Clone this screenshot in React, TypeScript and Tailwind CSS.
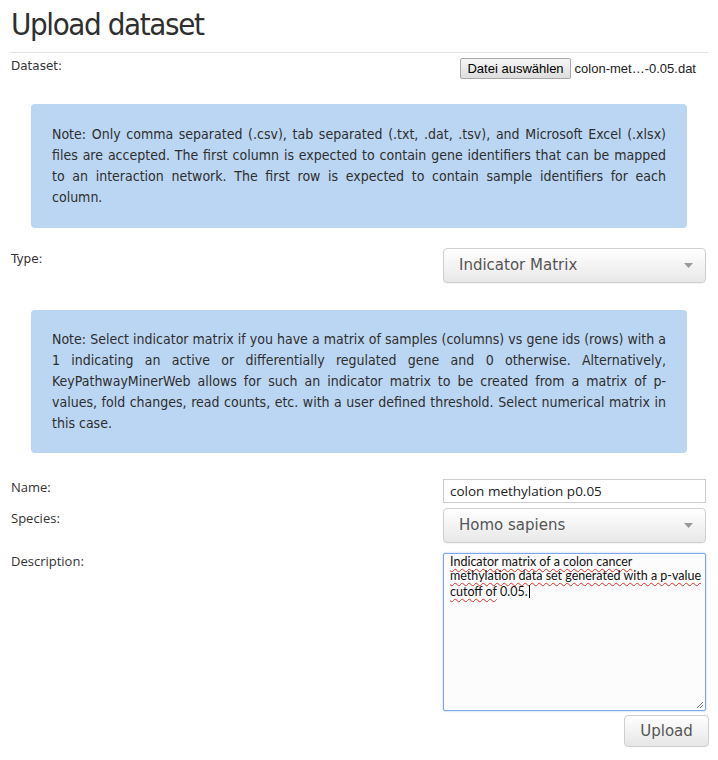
import React from "react";

const narrow = { fontFamily: '"Liberation Sans Narrow", "DejaVu Sans Condensed", "Liberation Sans", sans-serif' };

function Caret() {
  return (
    <svg width="9" height="5" viewBox="0 0 9 5" className="shrink-0">
      <path d="M0 0 H9 L4.5 5 Z" fill="#9a9a9a" />
    </svg>
  );
}

function FakeSelect({ value }: { value: string }) {
  return (
    <div className="flex h-[35px] w-[263px] items-center justify-between rounded-[4px] border border-[#cfcfcf] bg-gradient-to-b from-white to-[#e8e8e8] pl-[15px] pr-[12px] shadow-[0_1px_1px_rgba(0,0,0,0.05)]">
      <span className="text-[15px] text-[#555]" style={{ fontFamily: '"DejaVu Sans", sans-serif' }}>
        {value}
      </span>
      <Caret />
    </div>
  );
}

function Note({ children, pad }: { children: React.ReactNode; pad: string }) {
  return (
    <div
      className={"mx-[21px] rounded-[4px] bg-[#bbd6f2] px-[21px] text-justify text-[14px] leading-[21px] text-[#2e2e2e] " + pad}
      style={narrow}
    >
      {children}
    </div>
  );
}

const wavy = "underline decoration-wavy decoration-[#e0302a] decoration-1 underline-offset-[2px]";

export default function App() {
  return (
    <div className="min-h-[760px] w-[718px] bg-white px-[10px] text-[#333]">
      {/* Header */}
      <h1
        className="h-[53px] border-b border-[#e3e3e3] pl-[1px] pt-[4px] text-[31px] leading-[40px] tracking-[-1.4px] text-[#2f2f2f]"
        style={narrow}
      >
        Upload dataset
      </h1>

      {/* Dataset row */}
      <div className="flex items-start justify-between pt-[5px]">
        <span className="pl-[1px] text-[12px] leading-[16px]" style={{ fontFamily: '"DejaVu Sans", sans-serif' }}>
          Dataset:
        </span>
        <div className="flex items-center gap-[4px] pr-[12px]" style={{ fontFamily: '"Liberation Sans", Arial, sans-serif' }}>
          <div className="flex h-[21px] items-center rounded-[2px] border border-[#a9a9a9] bg-gradient-to-b from-[#f6f6f6] to-[#dddddd] px-[6px] text-[13px] text-black">
            Datei auswählen
          </div>
          <span className="text-[13px] text-[#222]">colon-met…-0.05.dat</span>
        </div>
      </div>

      <div className="mt-[25px]">
        <Note pad="py-[20px]">
          Note: Only comma separated (.csv), tab separated (.txt, .dat, .tsv), and Microsoft Excel (.xlsx) files are
          accepted. The first column is expected to contain gene identifiers that can be mapped to an interaction
          network. The first row is expected to contain sample identifiers for each column.
        </Note>
      </div>

      {/* Type row */}
      <div className="mt-[20px] flex items-start justify-between pr-[2px]">
        <span className="pl-[1px] pt-[2px] text-[12px]" style={{ fontFamily: '"DejaVu Sans", sans-serif' }}>
          Type:
        </span>
        <FakeSelect value="Indicator Matrix" />
      </div>

      <div className="mt-[27px]">
        <Note pad="py-[19px]">
          Note: Select indicator matrix if you have a matrix of samples (columns) vs gene ids (rows) with a 1 indicating
          an active or differentially regulated gene and 0 otherwise. Alternatively, KeyPathwayMinerWeb allows for such
          an indicator matrix to be created from a matrix of p-values, fold changes, read counts, etc. with a user
          defined threshold. Select numerical matrix in this case.
        </Note>
      </div>

      {/* Name / Species / Description */}
      <div className="mt-[26px] flex flex-col gap-[5px] pr-[2px]" style={{ fontFamily: '"Open Sans", sans-serif' }}>
        <div className="flex items-start justify-between">
          <span className="pl-[1px] text-[13px] leading-[16px]">Name:</span>
          <div className="flex h-[24px] w-[263px] items-center border border-[#cccccc] bg-white px-[6px] text-[13.5px] text-[#222]">
            colon methylation p0.05
          </div>
        </div>
        <div className="flex items-start justify-between">
          <span className="pl-[1px] pt-[2px] text-[13px] leading-[16px]">Species:</span>
          <FakeSelect value="Homo sapiens" />
        </div>
        <div className="mt-[5px] flex items-start justify-between">
          <span className="pl-[1px] text-[13px] leading-[16px]">Description:</span>
          <div
            className="relative h-[158px] w-[263px] rounded-[2px] border border-[#7ea7ea] bg-[#fcfcfc] pl-[6px] pr-[3px] pt-[1px] text-[12.5px] leading-[14px] text-[#111] shadow-[0_0_2px_rgba(80,140,230,0.6)]"
            style={{ fontFamily: 'Lato, "Open Sans", sans-serif' }}
          >
            <span className={wavy}>Indicator matrix of a colon cancer</span>
            <br />
            <span className={wavy}>methylation data set generated with a p-value</span>
            <br />
            <span className={wavy}>cutoff of</span> 0.05.
            <span className="ml-[1px] inline-block h-[13px] w-px translate-y-[2px] bg-black" />
            <svg width="8" height="8" viewBox="0 0 8 8" className="absolute bottom-[1px] right-[1px]">
              <path d="M7 1 L1 7 M7 4 L4 7" stroke="#777" strokeWidth="1" />
            </svg>
          </div>
        </div>
        <div className="flex justify-end">
          <div
            className="-mr-[3px] -mt-[1px] flex h-[32px] w-[85px] items-center justify-center rounded-[4px] border border-[#cfcfcf] bg-gradient-to-b from-white to-[#e6e6e6] text-[15px] text-[#555]"
            style={{ fontFamily: '"DejaVu Sans", sans-serif' }}
          >
            Upload
          </div>
        </div>
      </div>
    </div>
  );
}
